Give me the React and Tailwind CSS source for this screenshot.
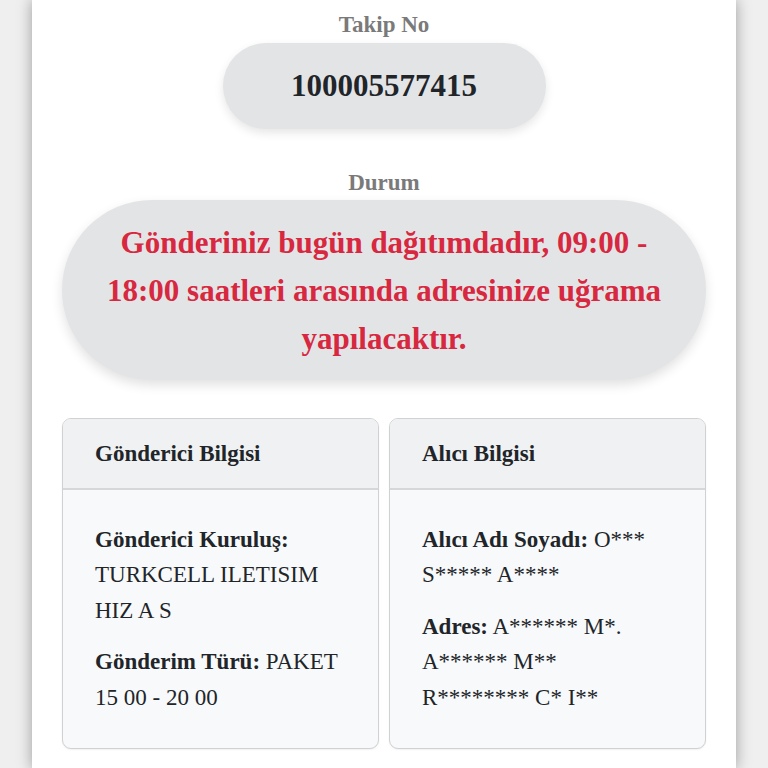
export default function App() {
  const serif = { fontFamily: '"Liberation Serif", "Times New Roman", serif' };
  return (
    <div className="w-full min-h-[768px] bg-[#efefef]" style={serif}>
      <div className="mx-[32px] min-h-[768px] bg-white shadow-[0_0_14px_rgba(0,0,0,0.35)] px-[30px] pt-[10px] pb-[20px]">
        <div className="flex flex-col items-center">
          <div className="text-[23px] leading-[30px] font-bold text-[#7a7a7a]">Takip No</div>
          <div className="mt-[3px] w-[323px] h-[86px] rounded-full bg-[#e3e4e6] shadow-[0_4px_10px_rgba(0,0,0,0.10)] flex items-center justify-center">
            <span className="text-[31px] font-bold text-[#212529]">100005577415</span>
          </div>
          <div className="mt-[39px] text-[23px] leading-[30px] font-bold text-[#7a7a7a]">Durum</div>
          <div className="mt-[2px] w-full rounded-[90px] bg-[#e3e4e6] shadow-[0_5px_12px_rgba(0,0,0,0.12)] px-[36px] pt-[19px] pb-[17px] text-center">
            <p className="text-[31px] leading-[48px] font-bold text-[#d7283f]">
              Gönderiniz bugün dağıtımdadır, 09:00 - 18:00 saatleri arasında adresinize uğrama yapılacaktır.
            </p>
          </div>
        </div>
        <div className="mt-[38px] grid grid-cols-2 gap-[10px] text-[23px] leading-[35.5px] text-[#212529]">
          <div className="rounded-[9px] border border-[#d0d1d3] bg-[#f8f9fa] overflow-hidden shadow-[0_1px_2px_rgba(0,0,0,0.06)]">
            <div className="bg-[#f0f1f2] border-b-2 border-[#d6d7d9] px-[32px] pt-[17px] pb-[16px] font-bold">Gönderici Bilgisi</div>
            <div className="px-[32px] pt-[32px] pb-[33px]">
              <p className="mb-[16px]"><b>Gönderici Kuruluş:</b> TURKCELL ILETISIM HIZ A S</p>
              <p><b>Gönderim Türü:</b> PAKET 15 00 - 20 00</p>
            </div>
          </div>
          <div className="rounded-[9px] border border-[#d0d1d3] bg-[#f8f9fa] overflow-hidden shadow-[0_1px_2px_rgba(0,0,0,0.06)]">
            <div className="bg-[#f0f1f2] border-b-2 border-[#d6d7d9] px-[32px] pt-[17px] pb-[16px] font-bold">Alıcı Bilgisi</div>
            <div className="px-[32px] pt-[32px] pb-[33px]">
              <p className="mb-[16px]"><b>Alıcı Adı Soyadı:</b> O***<br />S***** A****</p>
              <p><b>Adres:</b> A****** M*.<br />A****** M**<br />R******** C* I**</p>
            </div>
          </div>
        </div>
      </div>
    </div>
  );
}
